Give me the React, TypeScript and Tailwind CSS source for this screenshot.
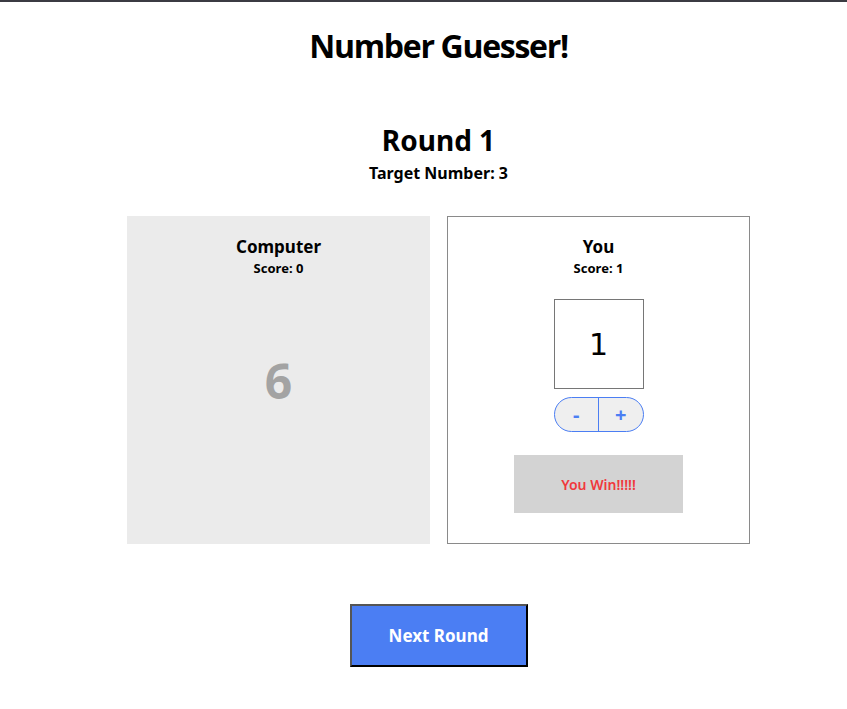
import { useState } from "react";

const App = () => {
  const [guess, setGuess] = useState(1);

  return (
    <div className="min-h-[709px] bg-white border-t-2 border-[#3b3b43] font-['Noto_Sans','Liberation_Sans',sans-serif] text-black">
      <div className="flex flex-col items-center pl-[30px]">
        <h1 className="mt-[24px] text-[32px] leading-[40px] font-bold font-['Open_Sans',sans-serif] tracking-[-1.3px]">
          Number Guesser!
        </h1>

        <h2 className="mt-[57px] text-[28px] leading-[34px] font-bold">Round 1</h2>
        <h3 className="mt-[6px] text-[16px] leading-[20px] font-bold">Target Number: 3</h3>

        <div className="mt-[33px] flex gap-[17px]">
          <div className="w-[303px] h-[328px] bg-[#ebebeb] flex flex-col items-center pt-[19px]">
            <h4 className="text-[17px] leading-[24px] font-bold">Computer</h4>
            <p className="mt-[1px] text-[13px] leading-[16px] font-bold">Score: 0</p>
            <p className="mt-[77px] text-[48px] leading-[56px] font-bold text-[#a3a3a3]">6</p>
          </div>

          <div className="w-[303px] h-[328px] border border-[#8a8a8a] flex flex-col items-center pt-[18px]">
            <h4 className="text-[17px] leading-[24px] font-bold">You</h4>
            <p className="mt-[1px] text-[13px] leading-[16px] font-bold">Score: 1</p>
            <div className="mt-[23px] w-[90px] h-[90px] border border-[#767676] flex items-center justify-center text-[30px] font-['DejaVu_Sans',sans-serif]">
              {guess}
            </div>
            <div className="mt-[8px] w-[90px] h-[35px] rounded-full border border-[#4b7ef3] bg-[#efefef] flex overflow-hidden text-[#4b7ef3] text-[20px] font-bold">
              <button
                onClick={() => setGuess(guess - 1)}
                className="flex-1 flex items-center justify-center border-r border-[#4b7ef3]"
              >
                -
              </button>
              <button
                onClick={() => setGuess(guess + 1)}
                className="flex-1 flex items-center justify-center"
              >
                +
              </button>
            </div>
            <div className="mt-[23px] w-[169px] h-[58px] bg-[#d3d3d3] flex items-center justify-center text-[14px] font-semibold text-[#f0383c]">
              You Win!!!!!
            </div>
          </div>
        </div>

        <button className="mt-[60px] w-[178px] h-[63px] bg-[#4b7ef3] text-white text-[17px] font-bold border-2 border-t-[#555] border-l-[#555] border-b-black border-r-black">
          Next Round
        </button>
      </div>
    </div>
  );
};

export default App;
